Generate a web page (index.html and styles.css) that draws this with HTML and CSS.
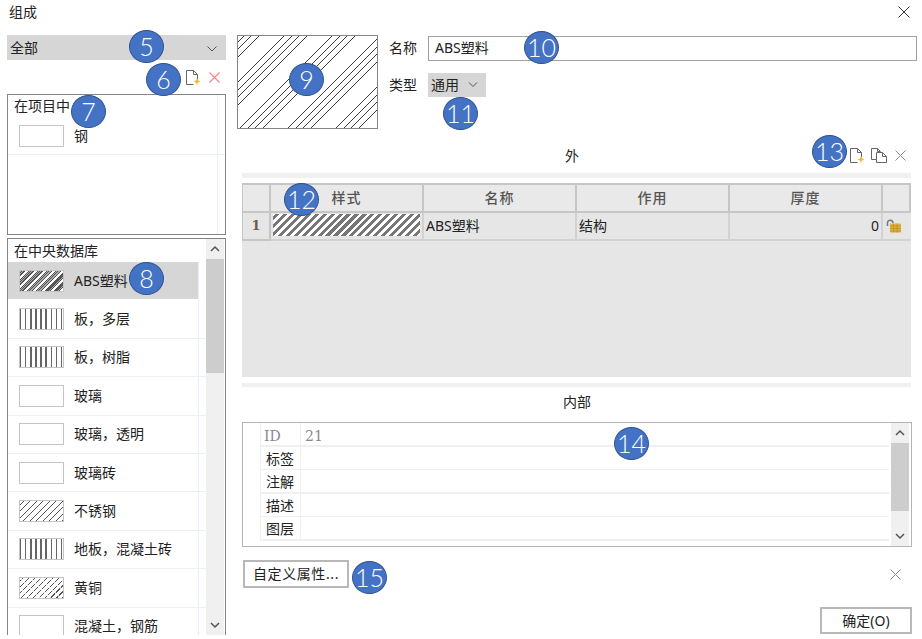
FILE: index.html
```html
<!DOCTYPE html>
<html lang="zh">
<head>
<meta charset="utf-8">
<title>组成</title>
<link rel="stylesheet" href="styles.css">
</head>
<body>
<div class="dialog">
  <header class="titlebar">
    <span>组成</span>
    <svg class="icon-close" width="12" height="12" viewBox="0 0 12 12"><path d="M.5.5l11 11M11.5.5l-11 11" stroke="#333" fill="none"/></svg>
  </header>
  <div class="main">
    <aside class="left">
      <div class="select"><span>全部</span><svg width="10" height="6" viewBox="0 0 10 6"><path d="M.5.5L5 5 9.500.5" stroke="#555" fill="none"/></svg></div>
      <div class="left-tools">
        <svg width="16" height="17" viewBox="0 0 16 17"><path d="M1.500 1.500h7l4 4v5M8.500 1.500v4h4M1.500 1.500v14h7" stroke="#666" fill="none"/><path d="M12 9l1 2.600 2.500 1-2.500 1-1 2.500-1-2.500-2.500-1 2.500-1z" fill="#f2b632"/></svg>
        <svg width="11" height="11" viewBox="0 0 11 11"><path d="M.5.500l10 10M10.500.500l-10 10" stroke="#f08a8a" stroke-width="1.200" fill="none"/></svg>
      </div>
      <section class="panel panel-project">
        <div class="panel-body">
          <div class="panel-title">在项目中</div>
          <div class="row"><div class="cell"><i class="swatch"></i>钢</div></div>
        </div>
      </section>
      <section class="panel panel-library">
        <div class="panel-body">
          <div class="panel-title">在中央数据库</div>
          <div class="row selected"><div class="cell"><i class="swatch h-abs"></i>ABS塑料</div></div>
          <div class="row"><div class="cell"><i class="swatch h-vert"></i>板，多层</div></div>
          <div class="row"><div class="cell"><i class="swatch h-vert"></i>板，树脂</div></div>
          <div class="row"><div class="cell"><i class="swatch"></i>玻璃</div></div>
          <div class="row"><div class="cell"><i class="swatch"></i>玻璃，透明</div></div>
          <div class="row"><div class="cell"><i class="swatch"></i>玻璃砖</div></div>
          <div class="row"><div class="cell"><i class="swatch h-diag"></i>不锈钢</div></div>
          <div class="row"><div class="cell"><i class="swatch h-vert"></i>地板，混凝土砖</div></div>
          <div class="row"><div class="cell"><i class="swatch h-brass"></i>黄铜</div></div>
          <div class="row"><div class="cell"><i class="swatch"></i>混凝土，钢筋</div></div>
        </div>
        <div class="scroll scroll-library">
          <svg width="12" height="20" viewBox="0 0 12 20"><path d="M2 12l4-4 4 4" stroke="#555" stroke-width="1.500" fill="none"/></svg>
          <div class="thumb"></div>
          <svg class="scroll-down" width="12" height="20" viewBox="0 0 12 20"><path d="M2 8l4 4 4-4" stroke="#555" stroke-width="1.500" fill="none"/></svg>
        </div>
      </section>
    </aside>
    <div class="right">
      <div class="top">
        <svg class="preview" width="141" height="94" viewBox="0 0 139 92"><path d="M-2 0L-95 93M6 0L-87 93M13 0L-80 93M21 0L-72 93M46 0L-47 93M54 0L-39 93M61 0L-32 93M69 0L-24 93M94 0L1 93M102 0L9 93M109 0L16 93M117 0L24 93M142 0L49 93M150 0L57 93M157 0L64 93M165 0L72 93M190 0L97 93M198 0L105 93M205 0L112 93M213 0L120 93" stroke="#222" stroke-width=".9" fill="none"/></svg>
        <div class="fields">
          <div class="field field-name"><label>名称</label><div class="input">ABS塑料</div></div>
          <div class="field"><label>类型</label><div class="type-select"><span>通用</span><svg width="10" height="6" viewBox="0 0 10 6"><path d="M1 .5L5 4.500 9 .5" stroke="#555" fill="none"/></svg></div></div>
        </div>
      </div>
      <div class="pane">
        <div class="section-head">
          <span class="outer-label">外</span>
          <div class="tools">
            <svg width="16" height="17" viewBox="0 0 16 17"><path d="M1.500 1.500h7l4 4v5M8.500 1.500v4h4M1.500 1.500v14h7" stroke="#666" fill="none"/><path d="M12 9l1 2.600 2.500 1-2.500 1-1 2.500-1-2.500-2.500-1 2.500-1z" fill="#f2b632"/></svg>
            <svg width="16" height="15" viewBox="0 0 16 15"><path d="M5.500 11.500h-5v-11h6l3 3M6.500.5v3h3M5.500 4.500h6l4 4v6h-10zM11.500 4.500v4h4" stroke="#666" fill="#fff"/></svg>
            <svg class="tool-x" width="11" height="11" viewBox="0 0 11 11"><path d="M.5.500l10 10M10.500.500l-10 10" stroke="#8a8a8a" fill="none"/></svg>
          </div>
        </div>
        <div class="band"></div>
        <div class="table">
          <div class="th"></div><div class="th">样式</div><div class="th">名称</div><div class="th">作用</div><div class="th">厚度</div><div class="th"></div>
          <div class="td td-num">1</div>
          <div class="td td-style"><i class="h-table"></i></div>
          <div class="td">ABS塑料</div>
          <div class="td">结构</div>
          <div class="td td-right">0</div>
          <div class="td td-lock"><svg width="16" height="14" viewBox="0 0 16 14"><path d="M1.500 7V3.500C1.500.5 7 .5 7 4" stroke="#777" stroke-width="1.500" fill="none"/><rect x="4" y="4.500" width="11" height="9" fill="#e0b040"/><path d="M4 7h11M4 9.500h11M4 12h11M7.500 4.500v9M11 4.500v9" stroke="#b58a20" stroke-width=".6"/></svg></div>
        </div>
        <div class="band band-lower"></div>
        <div class="inner-label">内部</div>
        <div class="props">
          <div class="prop-grid">
            <div class="prop-row muted"><span class="pk serif">ID</span><span class="pv serif">21</span></div>
            <div class="prop-row"><span class="pk">标签</span><span class="pv"></span></div>
            <div class="prop-row"><span class="pk">注解</span><span class="pv"></span></div>
            <div class="prop-row"><span class="pk">描述</span><span class="pv"></span></div>
            <div class="prop-row"><span class="pk">图层</span><span class="pv"></span></div>
          </div>
          <div class="scroll scroll-props">
            <svg width="12" height="20" viewBox="0 0 12 20"><path d="M2 12l4-4 4 4" stroke="#555" stroke-width="1.500" fill="none"/></svg>
            <div class="thumb"></div>
            <svg class="scroll-down" width="12" height="20" viewBox="0 0 12 20"><path d="M2 8l4 4 4-4" stroke="#555" stroke-width="1.500" fill="none"/></svg>
          </div>
        </div>
        <div class="custom-row">
          <button class="btn btn-custom">自定义属性...</button>
          <svg class="tool-x" width="11" height="11" viewBox="0 0 11 11"><path d="M.5.500l10 10M10.500.500l-10 10" stroke="#8a8a8a" fill="none"/></svg>
        </div>
        <div class="ok-row"><button class="btn btn-ok">确定(O)</button></div>
      </div>
    </div>
  </div>
  <span class="badge b5">5</span>
  <span class="badge b6">6</span>
  <span class="badge b7">7</span>
  <span class="badge b8">8</span>
  <span class="badge b9">9</span>
  <span class="badge b10">10</span>
  <span class="badge b11">11</span>
  <span class="badge b12">12</span>
  <span class="badge b13">13</span>
  <span class="badge b14">14</span>
  <span class="badge b15">15</span>
</div>
</body>
</html>
```
FILE: styles.css
```css
* { box-sizing: border-box; }
html, body { margin: 0; padding: 0; background: #fff; }
body { font: 14px/20px "Noto Sans", "Noto Sans CJK SC", sans-serif; color: #222; }
svg { display: block; flex: none; }

.dialog { position: relative; width: 922px; height: 639px; overflow: hidden; background: #fff; }

.titlebar { height: 24px; padding: 0 12px 0 9px; display: flex; justify-content: space-between; align-items: center; }
.main { margin-top: 11px; padding-left: 7px; display: flex; gap: 11px; }

.left { width: 219px; flex: none; }
.select { height: 25px; padding: 0 9px 0 3px; background: #d6d6d6; display: flex; align-items: center; justify-content: space-between; }
.select svg { margin-top: 3px; }
.left-tools { height: 34px; padding: 1px 6px 0 0; display: flex; align-items: center; justify-content: flex-end; gap: 8px; }

.panel { border: 1px solid #858585; display: flex; background: #fff; }
.panel-project { height: 141px; }
.panel-library { height: 397px; margin-top: 3px; border-bottom: 0; overflow: hidden; }
.panel-body { flex: 1; min-width: 0; }
.panel-project .panel-body { background: linear-gradient(90deg, transparent 209px, #e4effa 209px, #e4effa 210px, transparent 210px); }
.panel-title { height: 22px; padding-left: 6px; line-height: 22px; }
.panel-library .panel-title { height: 23px; line-height: 24px; }

.row { height: 38.4px; border-bottom: 1px solid #eef0f3; }
.panel-project .row { height: 38px; }
.cell { width: 191px; height: 100%; padding-left: 11px; display: flex; align-items: center; border-right: 1px solid #e4effa; }
.panel-project .cell { width: 100%; border-right: 0; }
.selected { border-bottom-color: transparent; }
.selected .cell { background: #d6d6d6; }

.swatch { width: 45px; height: 22px; margin-right: 10px; flex: none; border: 1px solid #c4c4c4; background: #fff; }
.h-abs { background: repeating-linear-gradient(-45deg, #fff 0 2.600px, #555 2.600px 3.400px, #aaa 3.400px 4.200px, #555 4.200px 5px, #aaa 5px 5.600px, #555 5.600px 6.400px); }
.h-vert { background: repeating-linear-gradient(90deg, #666 0 1.400px, #fff 1.400px 5.100px); }
.h-diag { background: repeating-linear-gradient(-45deg, #555 0 .8px, #fff .8px 4.600px); }
.h-brass {
  background:
    repeating-linear-gradient(45deg, rgba(255,255,255,.75) 0 1.200px, transparent 1.200px 7px),
    repeating-linear-gradient(-45deg, #555 0 .8px, #fff .8px 4.200px);
}

.scroll { width: 18px; flex: none; background: #f0f0f0; display: flex; flex-direction: column; align-items: center; position: relative; }
.scroll-library { margin-left: 0; margin-right: 1px; }
.scroll-library .thumb { height: 114px; }
.scroll-library .scroll-down { margin-top: auto; }
.thumb { width: 100%; background: #cdcdcd; }

.right { width: 680px; flex: none; }
.top { height: 94px; display: flex; gap: 11px; }
.preview { border: 1px solid #858585; overflow: hidden; }
.fields { flex: 1; min-width: 0; padding-top: 1px; }
.field { display: flex; align-items: center; gap: 11px; }
.field + .field { margin-top: 12px; }
.field-name label { padding-bottom: 1px; }
.input { flex: 1; height: 25px; padding-left: 6px; line-height: 21px; border: 1px solid #a0a0a0; }
.type-select { width: 58px; height: 24px; padding: 0 8px 0 3px; background: #d6d6d6; display: flex; align-items: center; justify-content: space-between; }

.pane { width: 670px; margin-left: 5px; }
.section-head { height: 33px; margin-top: 11px; padding-bottom: 2px; display: flex; align-items: center; }
.outer-label { margin-left: 323px; }
.tools { margin-left: auto; padding-right: 6px; display: flex; align-items: center; gap: 6px; }
.tools .tool-x { margin-left: 2px; }

.band { width: 669px; height: 5px; background: #f0f0f0; }
.table {
  width: 669px; height: 194px; margin-top: 5px;
  display: grid; grid-template-columns: 29px 153px 153px 153px 153px 28px; grid-template-rows: 30px 28px;
  align-content: start; background: #e6e6e6;
}
.th { border: solid #c6c6c6; border-width: 2px 2px 2px 0; background: #e9e9e9; text-align: center; line-height: 26px; color: #555; font-weight: 500; letter-spacing: 1px; }
.th:first-child { border-left-width: 1px; }
.td { padding: 0 2px; border: solid #d2d2d2; border-width: 0 2px 2px 0; line-height: 26px; display: flex; align-items: center; }
.td-num { justify-content: center; font-family: "DejaVu Serif", serif; font-weight: 700; color: #6b5d50; font-size: 13px; border-color: #c6c6c6; border-left: 1px solid #c6c6c6; }
.td-style { padding: 2px 2px 4px; }
.h-table { display: block; width: 100%; height: 22px; background: repeating-linear-gradient(-45deg, #fff 0 2.600px, #777 2.600px 5.600px); }
.td-right { justify-content: flex-end; }
.td-lock { justify-content: flex-start; padding: 0 0 0 3px; border-right: 0; }

.band-lower { height: 4px; margin-top: 6px; }
.inner-label { height: 35px; line-height: 29px; text-align: center; }

.props { height: 125px; border: 1px solid #b4b4b4; display: flex; overflow: hidden; }
.prop-grid { flex: 1; min-width: 0; padding-left: 17px; }
.prop-row { height: 23.500px; display: flex; border-bottom: 2px solid #f0f0f0; }
.prop-row span { line-height: 24px; }
.prop-row:nth-child(even) { border-bottom-width: 1px; }
.pk { width: 41px; padding-left: 5px; flex: none; border-left: 1px solid #f0f0f0; border-right: 1px solid #f0f0f0; }
.pv { flex: 1; padding-left: 4px; }
.prop-row .serif { font-family: "DejaVu Serif", serif; font-size: 14px; line-height: 26px; }
.prop-row .pk.serif { padding-left: 3px; }
.muted { color: #8a8590; }
.scroll-props { margin: 0 2px 0 2px; }
.scroll-props .thumb { height: 68px; }
.scroll-props .scroll-down { margin-top: auto; margin-bottom: 0; }

.btn { font: inherit; color: #222; background: #fff; border: 2px solid #b8b8b8; padding: 0; }
.custom-row { margin-top: 13px; padding: 0 11px 0 1px; display: flex; align-items: center; justify-content: space-between; }
.btn-custom { width: 106px; height: 28px; letter-spacing: .6px; }
.ok-row { margin-top: 19px; display: flex; justify-content: flex-end; }
.btn-ok { width: 92px; height: 27px; }

.badge {
  position: absolute; width: 35px; height: 33px; border: 1px solid #2f528f; border-radius: 50%;
  background: #4472c4; color: #fff; text-align: center;
  font: 300 25px/31px "Lato", "Liberation Sans", sans-serif;
}
.b5 { left: 129px; top: 30px; }
.b6 { left: 146px; top: 63px; }
.b7 { left: 71px; top: 95px; }
.b8 { left: 129px; top: 262px; }
.b9 { left: 289px; top: 63px; }
.b10 { left: 524px; top: 31px; }
.b11 { left: 443px; top: 97px; }
.b12 { left: 284px; top: 183px; }
.b13 { left: 812px; top: 135px; }
.b14 { left: 614px; top: 427px; }
.b15 { left: 352px; top: 561px; }
```
